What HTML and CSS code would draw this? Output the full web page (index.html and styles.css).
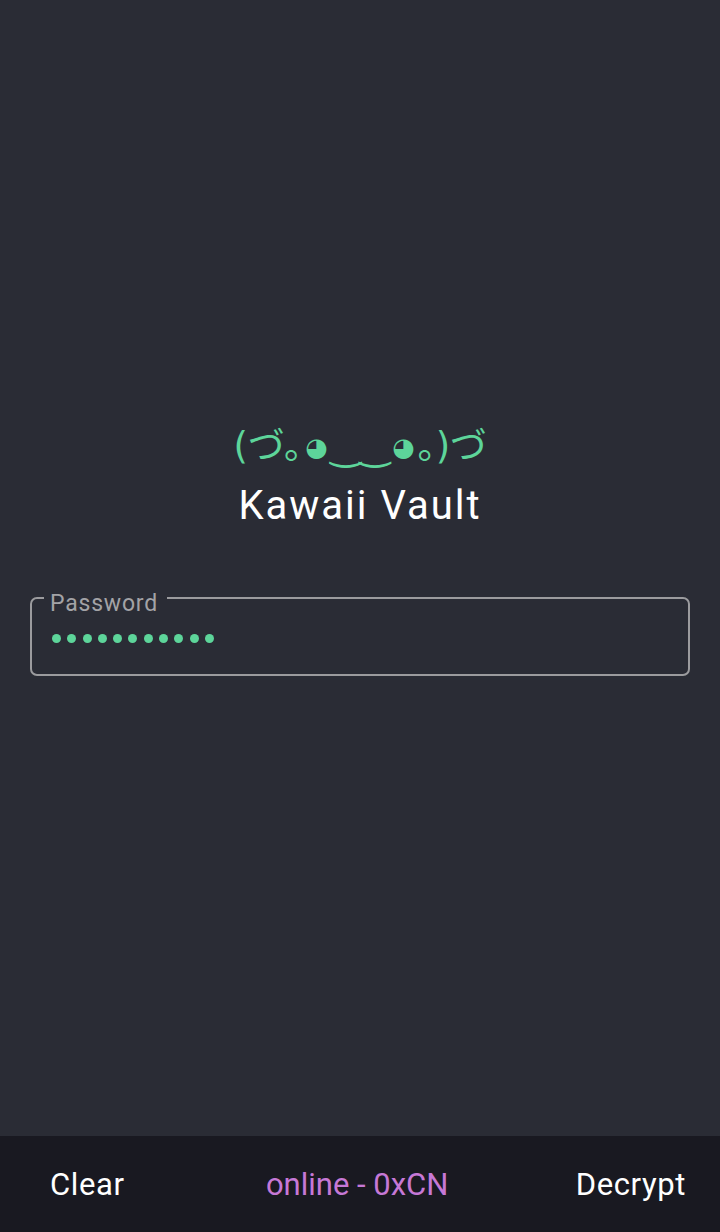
FILE: index.html
```html
<!DOCTYPE html>
<html lang="en">
<head>
<meta charset="utf-8">
<title>Kawaii Vault</title>
<link rel="stylesheet" href="styles.css">
</head>
<body>
<div class="app">
  <main class="main">
    <div class="hero">
      <div class="kaomoji">(づ｡<span class="eye">◕</span>‿‿<span class="eye">◕</span>｡)づ</div>
      <h1 class="title">Kawaii Vault</h1>
    </div>
    <fieldset class="field">
      <legend class="field-label">Password</legend>
      <div class="dots">
        <span class="dot"></span><span class="dot"></span><span class="dot"></span><span class="dot"></span><span class="dot"></span><span class="dot"></span><span class="dot"></span><span class="dot"></span><span class="dot"></span><span class="dot"></span><span class="dot"></span>
      </div>
    </fieldset>
  </main>
  <footer class="bar">
    <span class="bar-btn">Clear</span>
    <span class="status">online - 0xCN</span>
    <span class="bar-btn">Decrypt</span>
  </footer>
</div>
</body>
</html>
```
FILE: styles.css
```css
* { box-sizing: border-box; }
html, body { margin: 0; padding: 0; }
body {
  background: #2a2c35;
  font-family: Roboto, "Noto Sans", sans-serif;
  color: #ffffff;
}
.app {
  width: 720px;
  height: 1232px;
  display: flex;
  flex-direction: column;
}
.main {
  flex: 1;
  display: flex;
  flex-direction: column;
  align-items: center;
  padding: 422px 30px 0;
}
.hero {
  display: flex;
  flex-direction: column;
  align-items: center;
}
.kaomoji {
  color: #5dd59a;
  font-family: "DejaVu Sans", "Noto Sans CJK JP", sans-serif;
  font-size: 37px;
  line-height: 50px;
  height: 50px;
  letter-spacing: -0.4px;
}
.eye {
  font-size: 26px;
  vertical-align: 3px;
  margin: 0 3px;
}
.title {
  margin: 6px 0 0;
  font-weight: 400;
  font-size: 40px;
  line-height: 56px;
  letter-spacing: 2px;
  color: #ffffff;
}
.field {
  margin: 47px 0 0;
  width: 660px;
  height: 95px;
  border: 2px solid #9b9b9e;
  border-radius: 7px;
  padding: 0 18px 0 20px;
}
.field-label {
  padding: 12px 9px 0 6px;
  margin-left: -8px;
  font-size: 23px;
  line-height: 22px;
  color: #a3a3a6;
  letter-spacing: 0.8px;
}
.dots {
  display: flex;
  gap: 6.3px;
  padding-top: 19px;
}
.dot {
  width: 9px;
  height: 9px;
  border-radius: 50%;
  background: #5dd59a;
}
.bar {
  height: 96px;
  background: #191921;
  display: flex;
  align-items: center;
  justify-content: space-between;
  padding: 0 34px 0 50px;
  font-size: 31px;
}
.bar-btn {
  color: #ffffff;
  letter-spacing: 0.6px;
}
.status {
  color: #c678d6;
  margin-left: 14px;
}
```
